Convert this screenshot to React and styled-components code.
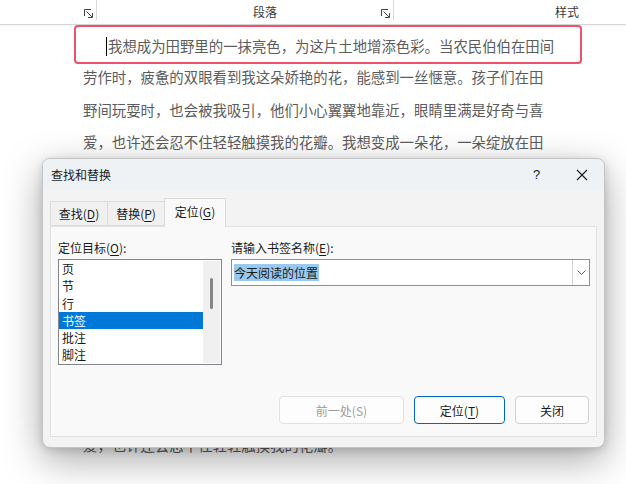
import React from 'react';
import styled, { createGlobalStyle } from 'styled-components';

const GlobalStyle = createGlobalStyle`
  html, body {
    margin: 0;
    padding: 0;
    background: #fff;
  }
  body {
    font-family: "Noto Sans CJK SC", "Noto Sans", sans-serif;
    overflow: hidden;
  }
`;

const Screen = styled.div`
  position: relative;
  width: 626px;
  height: 484px;
  overflow: hidden;
  background: #fff;
`;

const Ribbon = styled.div`
  display: flex;
  align-items: flex-start;
  height: 24px;
  border-bottom: 1px solid #d6d6d6;
  box-shadow: 0 1px 2px rgba(0, 0, 0, 0.06);
  background: #fff;
`;

const RibbonGroup = styled.div`
  flex: none;
  width: ${(p) => p.$width}px;
  height: 20px;
  box-sizing: border-box;
  padding: 3px 3px 0 ${(p) => p.$shift || 3}px;
  display: grid;
  grid-template-columns: 1fr auto 1fr;
  align-items: center;
  border-right: ${(p) => (p.$last ? 'none' : '1px solid #d9d9d9')};
`;

const GroupLabel = styled.span`
  grid-column: 2;
  font-size: 12px;
  line-height: 16px;
  color: #3a3a3a;
`;

const Launcher = styled.svg`
  grid-column: 3;
  justify-self: end;
  align-self: end;
  margin-bottom: 2px;
`;

const Document = styled.div`
  margin-left: 74px;
  width: 508px;
  font-size: 14.4px;
  color: #5c5c5c;
`;

const Highlight = styled.div`
  border: 2px solid #f0506a;
  border-radius: 4px;
  padding: 3px 0 0 7px;
  margin-bottom: -3px;
  line-height: 32px;
  white-space: nowrap;
`;

const Caret = styled.span`
  display: inline-block;
  width: 1px;
  height: 19px;
  margin: 0 1px 0 23px;
  background: #000;
  vertical-align: -4px;
`;

const Paragraph = styled.div`
  margin-top: ${(p) => p.$gap || 0}px;
  padding-left: 9px;
`;

const Line = styled.div`
  line-height: 32.5px;
  white-space: nowrap;
`;

const Dialog = styled.div`
  position: absolute;
  left: 42px;
  top: 158px;
  width: 563px;
  height: 290px;
  box-sizing: border-box;
  display: flex;
  flex-direction: column;
  border: 1px solid #c4c4c4;
  border-radius: 8px;
  overflow: hidden;
  background: #f3f3f3;
  box-shadow: 0 12px 38px rgba(0, 0, 0, 0.34), 0 2px 8px rgba(0, 0, 0, 0.14);
  font-size: 12px;
  color: #1a1a1a;
`;

const TitleBar = styled.div`
  flex: none;
  height: 31px;
  display: flex;
  align-items: center;
  padding-left: 8px;
  background: #eff2f5;
`;

const Title = styled.span`
  flex: 1;
  line-height: 16px;
`;

const TitleButton = styled.div`
  width: 45px;
  height: 31px;
  display: flex;
  align-items: center;
  justify-content: center;
  font-size: 13px;
  font-family: "Liberation Sans", sans-serif;
`;

const Body = styled.div`
  flex: 1;
  display: flex;
  flex-direction: column;
  padding: 8px 7px 10px;
`;

const TabBar = styled.div`
  position: relative;
  z-index: 1;
  display: flex;
  align-items: flex-end;
  height: 29px;
  margin-bottom: -1px;
`;

const Tab = styled.div`
  box-sizing: border-box;
  width: ${(p) => p.$width}px;
  height: ${(p) => (p.$active ? 29 : 25)}px;
  margin-bottom: ${(p) => (p.$active ? 0 : 1)}px;
  margin-left: -1px;
  display: flex;
  align-items: center;
  justify-content: center;
  padding-bottom: ${(p) => (p.$active ? 2 : 0)}px;
  border: 1px solid #dcdcdc;
  border-bottom: ${(p) => (p.$active ? 'none' : '1px solid #dcdcdc')};
  background: ${(p) => (p.$active ? '#f9f9f9' : '#f0f0f0')};
  line-height: 16px;
  &:first-child {
    margin-left: 0;
  }
`;

const Panel = styled.div`
  flex: 1;
  display: flex;
  flex-direction: column;
  padding: 13px 7px 12px 7px;
  border: 1px solid #e2e2e2;
  background: #f9f9f9;
`;

const Fields = styled.div`
  display: grid;
  grid-template-columns: 164px 359px;
  column-gap: 9px;
`;

const Label = styled.div`
  line-height: 16px;
  margin-bottom: 3px;
  white-space: nowrap;
`;

const ListBox = styled.div`
  height: 106px;
  box-sizing: border-box;
  display: flex;
  border: 1px solid #82868c;
  background: #fff;
`;

const Items = styled.div`
  flex: 1;
`;

const Item = styled.div`
  height: 17.3px;
  line-height: 17.3px;
  padding-left: 3px;
  background: ${(p) => (p.$selected ? '#0078d7' : 'transparent')};
  color: ${(p) => (p.$selected ? '#fff' : '#1a1a1a')};
`;

const ScrollTrack = styled.div`
  width: 17px;
  margin: 1px 1px 1px 0;
  padding-top: 17px;
  box-sizing: border-box;
  display: flex;
  justify-content: center;
  background: #f0f0f0;
`;

const ScrollThumb = styled.div`
  width: 3px;
  height: 31px;
  border-radius: 2px;
  background: #868686;
`;

const Combo = styled.div`
  height: 27px;
  box-sizing: border-box;
  display: flex;
  align-items: stretch;
  border: 1px solid #8f8f8f;
  background: #fff;
`;

const ComboText = styled.div`
  flex: 1;
  display: flex;
  align-items: center;
  padding-left: 2px;
`;

const Selected = styled.span`
  background: #99c9ef;
  line-height: 17px;
  padding: 0 1px 0 0;
`;

const DropButton = styled.div`
  width: 16px;
  display: flex;
  align-items: center;
  justify-content: center;
  border-left: 1px solid #d2d2d2;
`;

const Actions = styled.div`
  margin-top: auto;
  display: flex;
  justify-content: flex-end;
  gap: 10px;
`;

const Button = styled.div`
  width: ${(p) => p.$width}px;
  height: 28px;
  box-sizing: border-box;
  display: flex;
  align-items: center;
  justify-content: center;
  border-radius: 4px;
  border: 1px solid ${(p) => (p.$primary ? '#0067c0' : p.$disabled ? '#e2e2e2' : '#d0d0d0')};
  background: #fdfdfd;
  color: ${(p) => (p.$disabled ? '#9d9d9d' : '#1a1a1a')};
`;

const Acc = styled.u`
  text-underline-offset: 2px;
`;

const LauncherIcon = () => (
  <Launcher width="9" height="9" viewBox="0 0 9 9" fill="none" stroke="#444" strokeWidth="1">
    <path d="M0.5 7V0.5H7" />
    <path d="M2.5 2.5L8 8M8.5 4V8.5H4" />
  </Launcher>
);

const visibleLines = [
  '劳作时，疲惫的双眼看到我这朵娇艳的花，能感到一丝惬意。孩子们在田',
  '野间玩耍时，也会被我吸引，他们小心翼翼地靠近，眼睛里满是好奇与喜',
  '爱，也许还会忍不住轻轻触摸我的花瓣。我想变成一朵花，一朵绽放在田',
];

const hiddenLines = [
  '野里的花，在春风中舒展，在夏雨里挺立，在秋阳下微笑，把芬芳留给大',
  '地。当蜜蜂嗡嗡地飞来，我会敞开花心，把甜甜的花蜜送给它们；当蝴蝶',
  '翩翩起舞，我会轻轻摇曳，陪它们一起跳一支欢快的舞。我想成为田野里',
  '的一抹亮色，为这片土地增添色彩。当农民伯伯在田间劳作时，疲惫的双',
  '眼看到我这朵娇艳的花，能感到一丝惬意。孩子们在田野间玩耍时，也会',
  '被我吸引，他们小心翼翼地靠近，眼睛里满是好奇与喜悦，也许还会蹲下',
  '来闻一闻我的香气。我愿意静静地守候在这里，看日出日落，听虫鸣鸟唱',
  '，陪伴这片土地上的每一个人。孩子们在田野间玩耍时，眼睛里满是好奇与喜',
  '爱，也许还会忍不住轻轻触摸我的花瓣。',
];

const listItems = ['页', '节', '行', '书签', '批注', '脚注'];

export default function App() {
  return (
    <Screen>
      <GlobalStyle />
      <Ribbon>
        <RibbonGroup $width={97}>
          <LauncherIcon />
        </RibbonGroup>
        <RibbonGroup $width={297} $shift={43}>
          <GroupLabel>段落</GroupLabel>
          <LauncherIcon />
        </RibbonGroup>
        <RibbonGroup $width={346} $last>
          <GroupLabel>样式</GroupLabel>
        </RibbonGroup>
      </Ribbon>

      <Document>
        <Highlight>
          <Caret />
          我想成为田野里的一抹亮色，为这片土地增添色彩。当农民伯伯在田间
        </Highlight>
        <Paragraph>
          {visibleLines.map((t) => (
            <Line key={t}>{t}</Line>
          ))}
        </Paragraph>
        <Paragraph $gap={10}>
          {hiddenLines.map((t) => (
            <Line key={t}>{t}</Line>
          ))}
        </Paragraph>
      </Document>

      <Dialog>
        <TitleBar>
          <Title>查找和替换</Title>
          <TitleButton>?</TitleButton>
          <TitleButton>
            <svg width="12" height="12" viewBox="0 0 12 12" stroke="#1a1a1a" strokeWidth="1.1">
              <path d="M1 1L11 11M11 1L1 11" />
            </svg>
          </TitleButton>
        </TitleBar>
        <Body>
          <TabBar>
            <Tab $width={58}>
              查找(<Acc>D</Acc>)
            </Tab>
            <Tab $width={58}>
              替换(<Acc>P</Acc>)
            </Tab>
            <Tab $width={62} $active>
              定位(<Acc>G</Acc>)
            </Tab>
          </TabBar>
          <Panel>
            <Fields>
              <div>
                <Label>
                  定位目标(<Acc>O</Acc>):
                </Label>
                <ListBox>
                  <Items>
                    {listItems.map((t) => (
                      <Item key={t} $selected={t === '书签'}>
                        {t}
                      </Item>
                    ))}
                  </Items>
                  <ScrollTrack>
                    <ScrollThumb />
                  </ScrollTrack>
                </ListBox>
              </div>
              <div>
                <Label>
                  请输入书签名称(<Acc>E</Acc>):
                </Label>
                <Combo>
                  <ComboText>
                    <Selected>今天阅读的位置</Selected>
                  </ComboText>
                  <DropButton>
                    <svg width="9" height="5" viewBox="0 0 9 5" fill="none" stroke="#5a5a5a" strokeWidth="1">
                      <path d="M0.5 0.5L4.5 4.5L8.5 0.5" />
                    </svg>
                  </DropButton>
                </Combo>
              </div>
            </Fields>
            <Actions>
              <Button $width={125} $disabled>
                前一处(S)
              </Button>
              <Button $width={91} $primary>
                定位(<Acc>T</Acc>)
              </Button>
              <Button $width={74}>关闭</Button>
            </Actions>
          </Panel>
        </Body>
      </Dialog>
    </Screen>
  );
}
